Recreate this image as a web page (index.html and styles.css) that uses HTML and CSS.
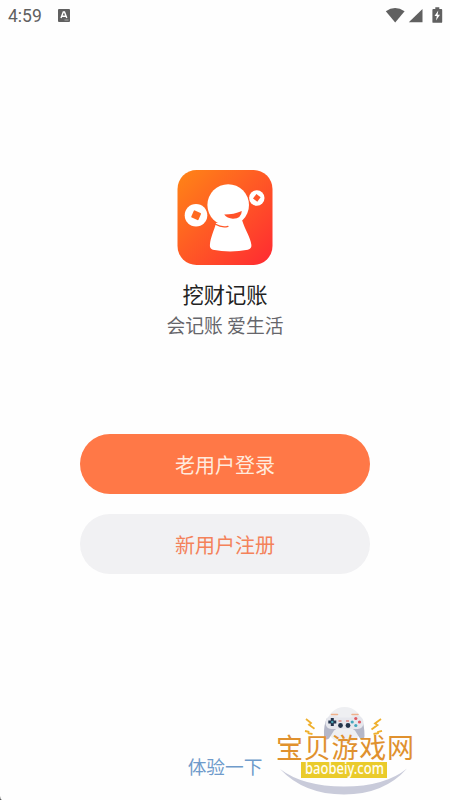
FILE: index.html
```html
<!DOCTYPE html>
<html lang="zh-CN">
<head>
<meta charset="utf-8">
<meta name="viewport" content="width=device-width, initial-scale=1">
<title>挖财记账</title>
<link rel="stylesheet" href="styles.css">
</head>
<body>
<div class="screen">
  <header class="status">
    <span class="clock">4:59</span>
    <svg class="app-badge" width="12" height="13" viewBox="0 0 12 13"><rect width="12" height="13" rx="1" fill="#606060"/><path d="M3 9 5.300 3h1.200L8.800 9M4 7.200h3.800" fill="none" stroke="#fff" stroke-width="1.400"/><path d="M6.500 11h4" stroke="#bbb" stroke-width=".8"/></svg>
    <svg class="indicators" width="58" height="18" viewBox="0 0 58 18"><path d="M.8 4.200Q10 -2 19.600 4.200L10.200 15.500Z" fill="#606060"/><path d="M37.500 2v13.300H23.800Z" fill="#606060"/><path d="M48.300 2h2V.3h4V2h2q.9 0 .9.900v12q0 .9-.9.900h-8q-.9 0-.9-.9v-12q0-.9.900-.9Z" fill="#606060"/><path d="m53.300 3.500-3.800 5.500h2.300l-.8 4.500 4-5.700h-2.400Z" fill="#fff"/></svg>
  </header>
  <main class="welcome">
    <svg class="logo" width="96" height="96" viewBox="0 0 96 96">
      <defs><linearGradient id="flame" x1="0" y1="0" x2="1" y2="1"><stop offset="0" stop-color="#ff8516"/><stop offset=".5" stop-color="#ff5825"/><stop offset="1" stop-color="#ff2932"/></linearGradient></defs>
      <rect x=".5" y="1" width="95" height="95" rx="19" fill="url(#flame)"/>
      <circle cx="51.200" cy="36" r="20.800" fill="#fff"/>
      <path d="M39 54C37 62 33.500 68 32.900 76q-.4 3.500 3 4.700 17 3.500 35 0 3.800-1 3.500-4.700C73.500 68 68 61 65 51Z" fill="#fff"/>
      <path d="M38.500 55.300Q45 59 51 57.300" fill="none" stroke="#ff5727" stroke-width="1.200" stroke-linecap="round"/>
      <path d="M47.200 45.500Q57 45.500 64.800 42 64.500 49.500 56 49.700 50 49.500 47.200 45.500Z" fill="#ff5229"/>
      <circle cx="19" cy="46.300" r="11.300" fill="#fff"/>
      <path d="m17.900 41.500 5.600 2.500q.8.400.4 1.200L21.600 50.600q-.4.800-1.200.4l-5.600-2.400q-.8-.4-.5-1.200l2.400-5.500q.4-.8 1.200-.4Z" fill="#ff6a20"/>
      <circle cx="79.800" cy="29" r="7.700" fill="#fff"/>
      <path d="m79.400 25 4.200 3.300-3.300 4.500-4.300-3.200Z" fill="#ff5528"/>
    </svg>
    <h1 class="name">挖财记账</h1>
    <p class="slogan">会记账 爱生活</p>
    <div class="actions">
      <button class="btn btn-login">老用户登录</button>
      <button class="btn btn-register">新用户注册</button>
    </div>
    <a class="trial">体验一下</a>
  </main>
  <svg class="corner" width="3" height="4" viewBox="0 0 3 4"><path d="M0 0Q0 3 2 4H0Z" fill="#555"/></svg>
  <svg class="watermark" width="160" height="100" viewBox="0 0 160 100">
    <circle cx="79.500" cy="25" r="18" fill="#eeeff2"/>
    <path d="M15 69Q39 94.500 79 94.500T142 68.500Q120 86.500 79 86.500T15 69Z" fill="#c9cbda"/>
    <path d="M66.500 14.500h6M87 14.500h6" stroke="#efb18b" stroke-width="1.500" stroke-linecap="round"/>
    <path d="M62 18Q58.500 25 59 36q.8 5.500 5 2.500l5-8q2-2 5-2h11q3 0 5 2l5 8q4 3 4.500-2.500Q99.500 25 96.500 18Z" fill="#b4b7c8"/>
    <path d="M65 16q5-1 9 1.500h11q4-2.500 9-1.500 4.500 1.500 4.500 7 0 5.500-6 6H66.500q-6-.5-6-6 .2-5.500 4.500-7Z" fill="#e6e7ed"/>
    <path d="M67.300 18v8M63.300 22h8" stroke="#23344d" stroke-width="3"/>
    <circle cx="67.300" cy="22" r="1.200" fill="#4caaba"/>
    <g fill="#df5963"><circle cx="90.800" cy="18.500" r="1.600"/><circle cx="94.500" cy="22" r="1.600"/></g>
    <g fill="#42a7bd"><circle cx="87.200" cy="22" r="1.600"/><circle cx="90.800" cy="25.500" r="1.600"/></g>
    <path d="M73.500 21h3M81 21h3" stroke="#d95b51" stroke-width="1.200"/>
    <g fill="#24354c"><circle cx="75.500" cy="25.500" r="2.400"/><circle cx="83" cy="25.500" r="2.400"/></g>
    <g fill="none" stroke="#efb02e" stroke-width="1.800"><path d="m41 19 5 4-2 1.700 5.500 4M40 31l3.500.8v1.500l4 .7M116 19l-6 4.500 2.500 1.500-6 4.500M117 30.800l-4 1.200v1.200l-4.500.8"/></g>
    <text class="wm-name" x="11" y="58" textLength="138" lengthAdjust="spacing">宝贝游戏网</text>
    <rect x="36" y="62" width="86" height="16" fill="#eacb2b"/>
    <text class="wm-site" x="40" y="74" textLength="79" lengthAdjust="spacingAndGlyphs">baobeiy.com</text>
  </svg>
</div>
</body>
</html>
```
FILE: styles.css
```css
* { box-sizing: border-box; }
body {
  margin: 0;
  background: #fefefe;
  font-family: "Noto Sans CJK SC", "Noto Sans", sans-serif;
}
.screen {
  position: relative;
  display: flex;
  flex-direction: column;
  width: 450px;
  height: 800px;
  overflow: hidden;
}
.status {
  display: flex;
  align-items: center;
  height: 32px;
  padding: 0 7px 0 8px;
}
.clock {
  width: 50px;
  color: #606060;
  font: 17.500px/32px Roboto, sans-serif;
}
.app-badge { margin-top: -1px; }
.indicators { margin-left: auto; margin-top: -1px; }
.welcome {
  flex: 1;
  display: flex;
  flex-direction: column;
  align-items: center;
  padding-top: 137px;
}
.logo { display: block; }
.name {
  margin: 13px 0 0;
  color: #222;
  font-size: 21.300px;
  font-weight: 400;
  line-height: 32px;
}
.slogan {
  margin: 0;
  color: #66666b;
  font-size: 18.800px;
  line-height: 30px;
}
.actions {
  display: flex;
  flex-direction: column;
  gap: 20px;
  margin-top: 94px;
}
.btn {
  width: 290px;
  height: 60px;
  padding: 2px 0 0;
  border: 0;
  border-radius: 30px;
  font: 400 20px/58px "Noto Sans CJK SC", sans-serif;
}
.btn-login { background: #ff7847; color: #ffeadd; }
.btn-register { background: #f1f1f3; color: #f4825a; }
.trial {
  margin-top: 177px;
  color: #6f9bcb;
  font-size: 18.700px;
  line-height: 30px;
}
.corner { position: absolute; left: 0; bottom: 0; }
.watermark { position: absolute; left: 265px; top: 700px; }
.wm-name { fill: #e0912e; font-size: 27px; }
.wm-site { fill: #fffdf0; font: 500 16px "Noto Sans", sans-serif; }
```
